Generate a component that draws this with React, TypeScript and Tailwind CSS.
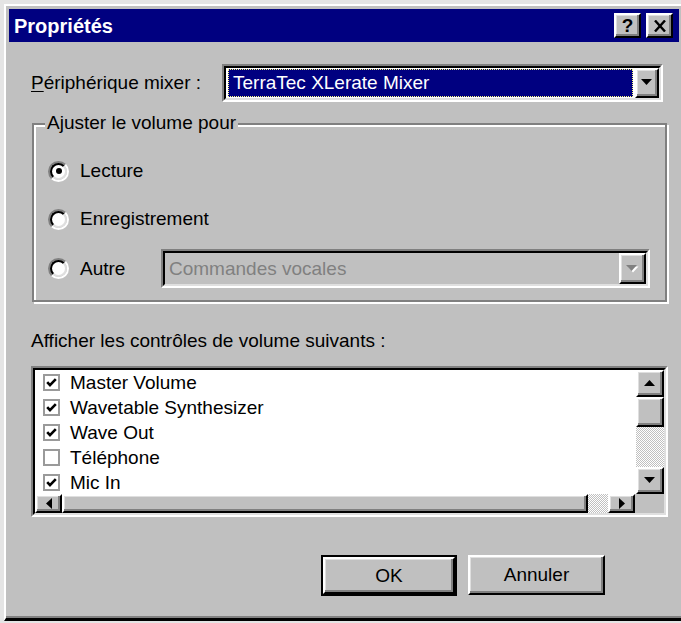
import React from "react";

const raised =
  "border-2 border-t-white border-l-white border-r-black border-b-black shadow-[inset_-2px_-2px_0_#808080,inset_1px_1px_0_#dfdfdf]";
const sunkenOuter =
  "border-2 border-t-[#808080] border-l-[#808080] border-r-white border-b-white";
const sunkenInner =
  "border-2 border-t-black border-l-black border-r-[#dfdfdf] border-b-[#dfdfdf]";
const hatch =
  "bg-[repeating-conic-gradient(#c0c0c0_0_25%,#ffffff_0_50%)] bg-[length:2px_2px]";

function Tri({ dir, color = "#000", shadow = false }: { dir: "up" | "down" | "left" | "right"; color?: string; shadow?: boolean }) {
  if (dir === "up" || dir === "down") {
    const d = dir === "down" ? "M0 0H11L5.5 6Z" : "M0 6H11L5.5 0Z";
    return (
      <svg width="13" height="8" viewBox="0 0 13 8">
        {shadow && <path d={d} fill="#fff" transform="translate(1.5 1.5)" />}
        <path d={d} fill={color} />
      </svg>
    );
  }
  const d = dir === "left" ? "M6 0V11L0 5.5Z" : "M0 0V11L6 5.5Z";
  return (
    <svg width="6" height="11" viewBox="0 0 6 11">
      <path d={d} fill={color} />
    </svg>
  );
}

function Radio({ checked }: { checked?: boolean }) {
  return (
    <div className="w-[21px] h-[21px] rounded-full border-2 border-t-[#808080] border-l-[#808080] border-r-white border-b-white shrink-0 flex">
      <div className="flex-1 rounded-full border-2 border-t-black border-l-black border-r-[#dfdfdf] border-b-[#dfdfdf] bg-white flex items-center justify-center">
        {checked && <div className="w-[6px] h-[6px] rounded-full bg-black" />}
      </div>
    </div>
  );
}

function Check({ checked }: { checked?: boolean }) {
  return (
    <div className="w-[17px] h-[17px] border-2 border-[#9a9a9a] bg-white shrink-0 flex items-center justify-center">
      {checked && (
        <svg width="13" height="13" viewBox="0 0 13 13">
          <path d="M2.2 6.2 L5 9.2 L10.8 3.2" stroke="#000" strokeWidth="2.6" fill="none" />
        </svg>
      )}
    </div>
  );
}

const items: [string, boolean][] = [
  ["Master Volume", true],
  ["Wavetable Synthesizer", true],
  ["Wave Out", true],
  ["Téléphone", false],
  ["Mic In", true],
];

export default function App() {
  return (
    <div className="w-[681px] h-[623px] overflow-hidden bg-[#e4e4e4] font-['Liberation_Sans',Arial,sans-serif] text-[19px] text-black leading-[22px]">
      <div className="ml-[4px] mt-[4px] w-[680px] h-[617px] bg-[#c0c0c0] border-t-2 border-l-2 border-r-2 border-white border-r-black border-b-[3px] border-b-black shadow-[inset_0_-2px_0_#808080] p-[3px] flex flex-col">
        {/* Title bar */}
        <div className="h-[33px] shrink-0 bg-[#000080] flex items-center pl-[5px] pr-[6px]">
          <span className="text-white font-bold text-[20px]">Propriétés</span>
          <div className="ml-auto flex gap-[5px]">
            <div className={`w-[27px] h-[25px] bg-[#c0c0c0] ${raised} flex items-center justify-center font-bold text-[19px]`}>?</div>
            <div className={`w-[27px] h-[25px] bg-[#c0c0c0] ${raised} flex items-center justify-center`}>
              <svg width="12" height="12" viewBox="0 0 12 12">
                <path d="M1 0.5 L11 11.5 M11 0.5 L1 11.5" stroke="#000" strokeWidth="2.4" />
              </svg>
            </div>
          </div>
        </div>

        {/* Body */}
        <div className="flex flex-col pl-[22px]">
          {/* Mixer row */}
          <div className="mt-[22px] h-[38px] flex items-center">
            <div className="w-[191px]">
              <span className="underline underline-offset-2">P</span>ériphérique mixer :
            </div>
            <div className={`w-[441px] h-[38px] ${sunkenOuter} flex`}>
              <div className={`flex-1 ${sunkenInner} bg-white flex`}>
                <div className="flex-1 my-[1px] mx-[2px] bg-[#000080] border border-dotted border-[#ffff80] text-white flex items-center pl-[4px]">
                  TerraTec XLerate Mixer
                </div>
                <div className={`w-[24px] bg-[#c0c0c0] ${raised} flex items-center justify-center`}>
                  <Tri dir="down" />
                </div>
              </div>
            </div>
          </div>

          {/* Group box */}
          <div className="mt-[21px] ml-[1px] w-[635px] h-[179px] relative border-2 border-[#808080] shadow-[inset_2px_2px_0_#fff,2px_2px_0_#fff]">
            <div className="absolute left-[11px] top-[-13px] bg-[#c0c0c0] px-[2px]">Ajuster le volume pour</div>
            <div className="flex flex-col pl-[14px] pt-[31px]">
              <div className="h-[30px] flex items-center gap-[11px]">
                <Radio checked />
                <span>Lecture</span>
              </div>
              <div className="mt-[18px] h-[30px] flex items-center gap-[11px]">
                <Radio />
                <span>Enregistrement</span>
              </div>
              <div className="mt-[15px] h-[39px] flex items-center">
                <Radio />
                <span className="ml-[11px] w-[81px]">Autre</span>
                <div className={`w-[489px] h-[39px] ${sunkenOuter} flex`}>
                  <div className={`flex-1 ${sunkenInner} bg-[#c0c0c0] flex`}>
                    <div className="flex-1 flex items-center pl-[4px] text-[#808080]">Commandes vocales</div>
                    <div className={`w-[27px] bg-[#c0c0c0] ${raised} flex items-center justify-center`}>
                      <Tri dir="down" color="#808080" shadow />
                    </div>
                  </div>
                </div>
              </div>
            </div>
          </div>

          <div className="mt-[28px] h-[22px]">Afficher les contrôles de volume suivants :</div>

          {/* List */}
          <div className={`mt-[14px] w-[637px] h-[151px] ${sunkenOuter} flex`}>
            <div className={`flex-1 ${sunkenInner} bg-white flex flex-col`}>
              <div className="h-[124px] flex">
                <div className="flex-1 overflow-hidden flex flex-col">
                  {items.map(([label, on]) => (
                    <div key={label} className="h-[25px] shrink-0 flex items-center pl-[8px] gap-[10px]">
                      <Check checked={on} />
                      <span>{label}</span>
                    </div>
                  ))}
                </div>
                <div className="w-[28px] flex flex-col">
                  <div className={`h-[27px] bg-[#c0c0c0] ${raised} flex items-center justify-center`}>
                    <Tri dir="up" />
                  </div>
                  <div className={`h-[30px] bg-[#c0c0c0] ${raised}`} />
                  <div className={`flex-1 ${hatch}`} />
                  <div className={`h-[27px] bg-[#c0c0c0] ${raised} flex items-center justify-center`}>
                    <Tri dir="down" />
                  </div>
                </div>
              </div>
              <div className="flex-1 flex">
                <div className={`w-[27px] bg-[#c0c0c0] ${raised} flex items-center justify-center`}>
                  <Tri dir="left" />
                </div>
                <div className={`w-[526px] bg-[#c0c0c0] ${raised}`} />
                <div className={`w-[20px] ${hatch}`} />
                <div className={`w-[27px] bg-[#c0c0c0] ${raised} flex items-center justify-center`}>
                  <Tri dir="right" />
                </div>
                <div className="flex-1 bg-[#c0c0c0]" />
              </div>
            </div>
          </div>

          {/* Buttons */}
          <div className="mt-[38px] ml-[290px] flex items-start gap-[11px]">
            <div className="w-[136px] h-[41px] border-2 border-black flex">
              <div className={`flex-1 bg-[#c0c0c0] ${raised} flex items-center justify-center`}>OK</div>
            </div>
            <div className={`w-[137px] h-[40px] bg-[#c0c0c0] ${raised} flex items-center justify-center`}>Annuler</div>
          </div>
        </div>
      </div>
    </div>
  );
}
